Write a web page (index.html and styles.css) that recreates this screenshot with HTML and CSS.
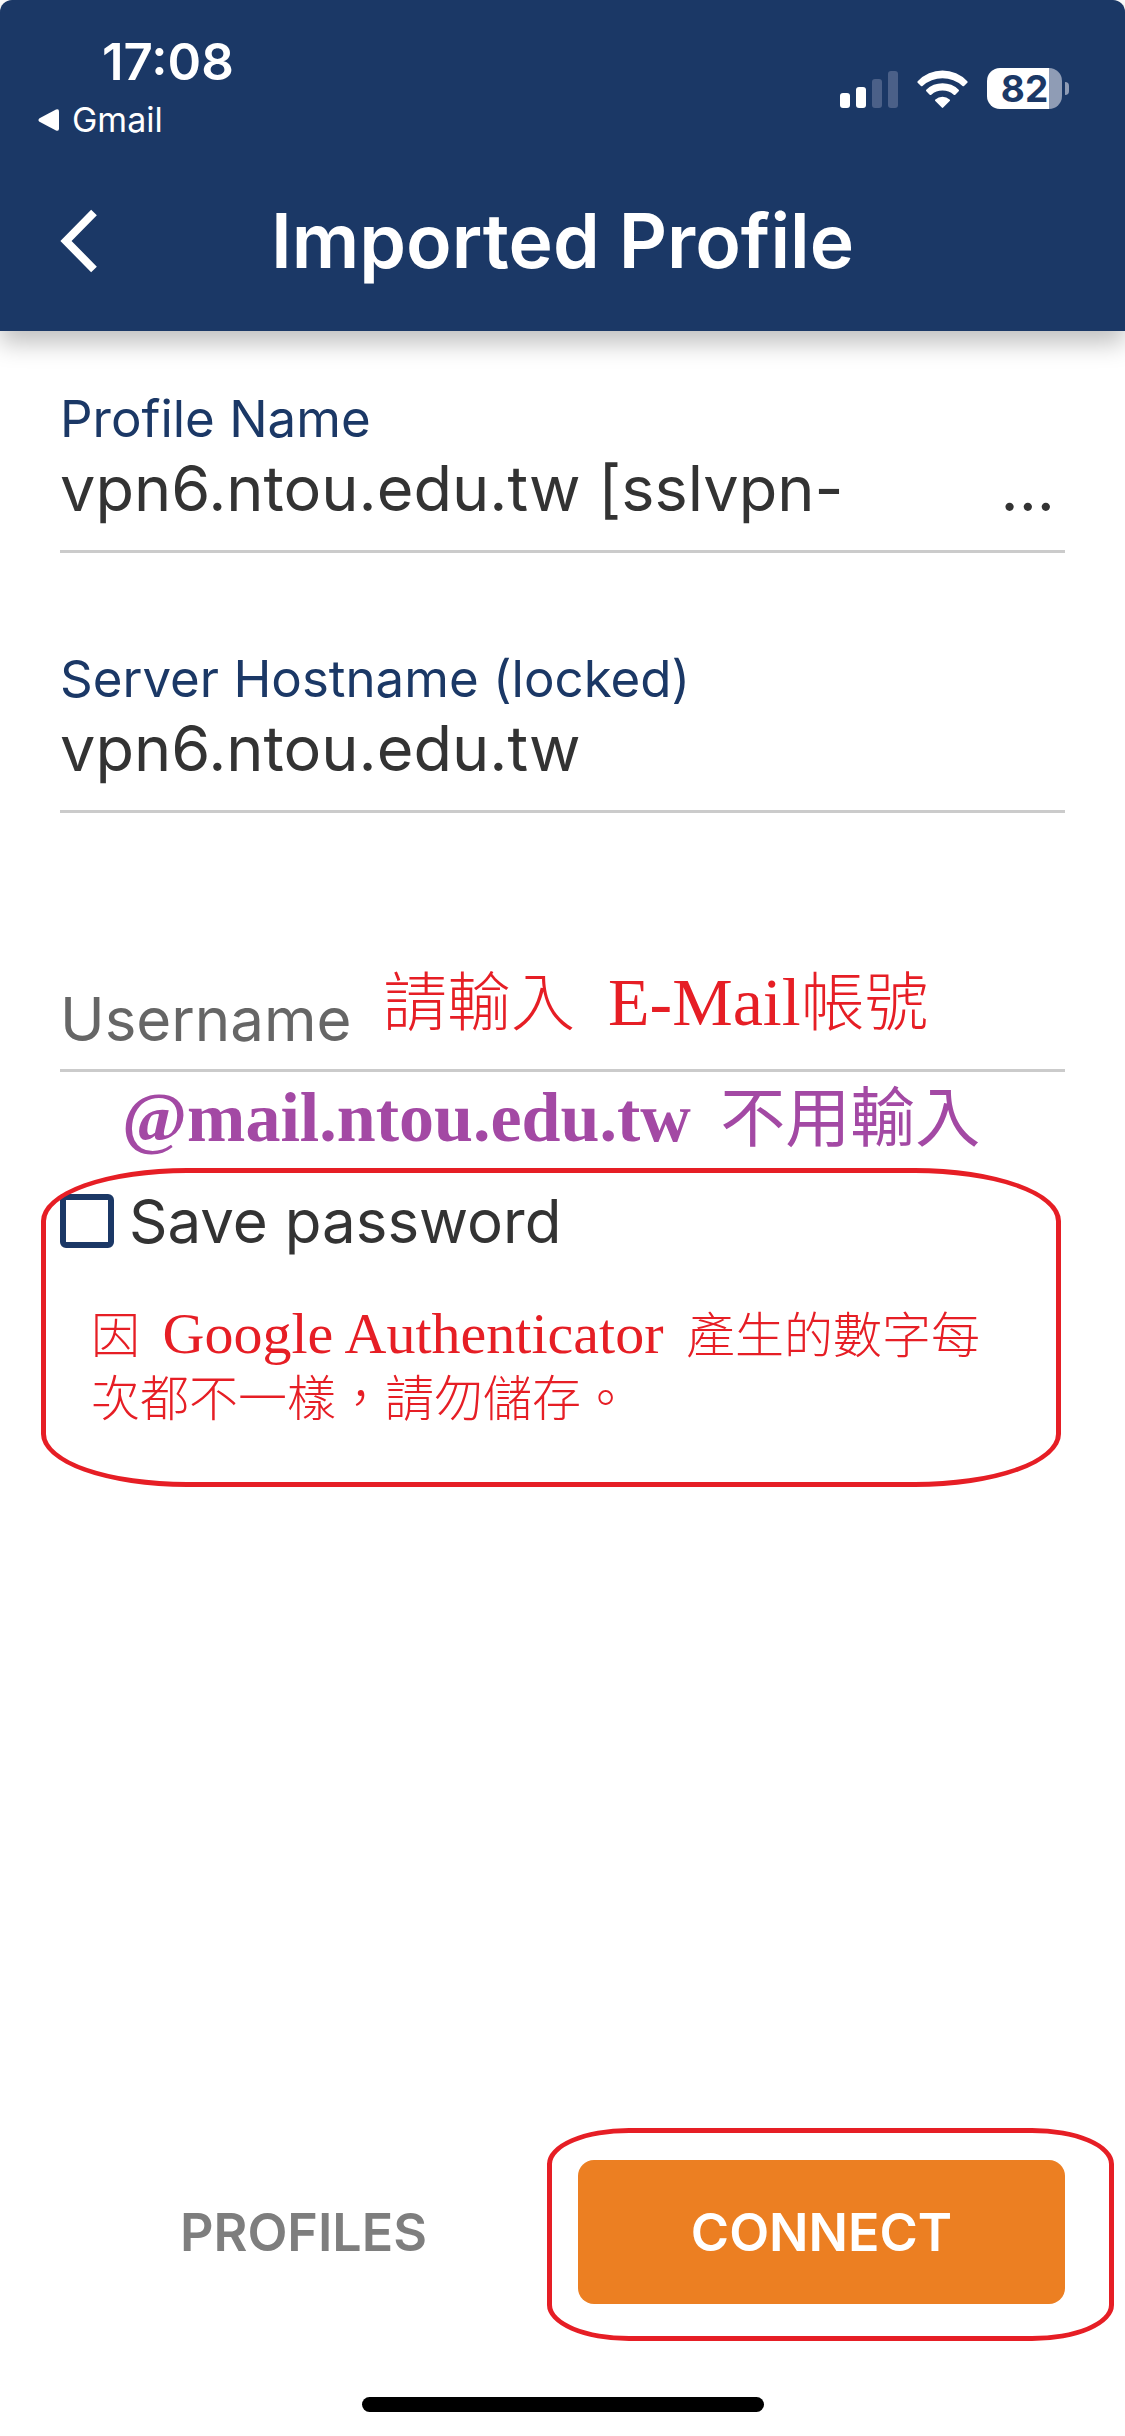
FILE: index.html
```html
<!DOCTYPE html>
<html lang="zh-Hant">
<head>
<meta charset="utf-8">
<meta name="viewport" content="width=device-width, initial-scale=1">
<title>Imported Profile</title>
<link rel="stylesheet" href="styles.css">
</head>
<body>
<header class="app-header">
  <div class="status-bar">
    <div class="status-left">
      <time class="clock">17:08</time>
      <a class="return-link" href="#gmail">
        <svg class="return-icon" viewBox="0 0 21 22" aria-hidden="true"><path d="M1.5 9.2 18 .6Q21-.6 21 2.500V19.500Q21 22.600 18 21.400L1.500 12.800Q-.6 11 1.500 9.200Z" fill="#fff"/></svg>
        <span>Gmail</span>
      </a>
    </div>
    <div class="status-right">
      <svg class="signal" viewBox="0 0 58 38" aria-hidden="true">
        <rect x="0" y="23" width="10" height="15" rx="3" fill="#fff"/>
        <rect x="16" y="17" width="10" height="21" rx="3" fill="#fff"/>
        <rect x="32" y="9" width="10" height="29" rx="3" fill="#4b6088"/>
        <rect x="48" y="1" width="10" height="37" rx="3" fill="#4b6088"/>
      </svg>
      <svg class="wifi" viewBox="0 0 51 38" fill="#fff" aria-hidden="true">
        <path d="M.7 11.200A34 34 0 0 1 50.300 11.200Q51 12 50.300 12.800L47 16Q46.300 16.600 45.500 16A30 30 0 0 0 5.500 16Q4.700 16.600 4 16L.7 12.800Q0 12 .7 11.200Z"/>
        <path d="M9.300 19.800A23 23 0 0 1 41.700 19.800Q42.400 20.600 41.700 21.300L38.300 24.700Q37.500 25.400 36.700 24.700A17 17 0 0 0 14.300 24.700Q13.500 25.400 12.700 24.700L9.300 21.300Q8.600 20.600 9.300 19.800Z"/>
        <path d="M18.400 29.400A11 11 0 0 1 32.600 29.400Q33.400 30.200 32.700 31L26.200 37.600Q25.500 38.200 24.800 37.600L18.300 31Q17.600 30.200 18.400 29.400Z"/>
      </svg>
      <div class="battery"><span class="battery-level">82</span></div>
    </div>
  </div>
  <div class="title-bar">
    <button class="back-button" type="button" aria-label="Back">
      <svg class="back-icon" viewBox="0 0 38 64" aria-hidden="true"><path d="M34 3.500 6 32 34 60.500" fill="none" stroke="#fff" stroke-width="8"/></svg>
    </button>
    <h1 class="title">Imported Profile</h1>
  </div>
</header>

<main class="form">
  <div class="field">
    <label class="field-label" for="profile-name">Profile Name</label>
    <div class="field-row">
      <input class="field-input" id="profile-name" type="text" value="vpn6.ntou.edu.tw [sslvpn-">
      <span class="field-more">...</span>
    </div>
  </div>
  <div class="field">
    <label class="field-label" for="hostname">Server Hostname (locked)</label>
    <div class="field-row">
      <input class="field-input" id="hostname" type="text" value="vpn6.ntou.edu.tw" readonly>
    </div>
  </div>
  <div class="field field-username">
    <input class="field-input field-input-empty" id="username" type="text" placeholder="Username" aria-label="Username">
    <p class="note note-account">請輸入<span class="note-latin note-account-name"> E-Mail</span>帳號</p>
  </div>
  <p class="note note-domain"><span class="note-latin note-domain-name">@mail.ntou.edu.tw </span>不用輸入</p>
  <section class="save-panel">
    <div class="save-row">
      <input class="checkbox" id="save-password" type="checkbox">
      <label class="save-label" for="save-password">Save password</label>
    </div>
    <p class="note note-save">因<span class="note-latin note-save-name"> Google Authenticator </span>產生的數字每<br>次都不一樣，請勿儲存。</p>
  </section>
</main>

<footer class="actions">
  <div class="action-row">
    <button class="action action-plain" type="button">PROFILES</button>
    <div class="connect-wrap">
      <button class="action action-primary" type="button">CONNECT</button>
    </div>
  </div>
  <div class="home-indicator"></div>
</footer>
</body>
</html>
```
FILE: styles.css
```css
:root {
  --navy: #1b3866;
  --ink: #333;
  --rule: #cbcbcb;
  --mark: #e61e25;
  --gutter: 60px;
}

* {
  box-sizing: border-box;
}

body {
  margin: 0;
  min-height: 100vh;
  display: flex;
  flex-direction: column;
  background: #fff;
  color: var(--ink);
  font-family: Inter, "Noto Sans CJK TC", sans-serif;
}

button,
input {
  font: inherit;
  color: inherit;
  border: 0;
  padding: 0;
  background: none;
}

p,
h1 {
  margin: 0;
}

/* Header */

.app-header {
  background: var(--navy);
  color: #fff;
  border-radius: 12px 12px 0 0;
  box-shadow: 0 12px 24px rgba(0, 0, 0, 0.25);
}

.status-bar {
  height: 150px;
  padding: 32px 56px 0 38px;
  display: flex;
  justify-content: space-between;
  align-items: flex-start;
}

.clock {
  display: block;
  padding-left: 64px;
  font-size: 51px;
  line-height: 60px;
  font-weight: 600;
}

.return-link {
  display: flex;
  align-items: center;
  gap: 13px;
  color: inherit;
  text-decoration: none;
  font-size: 34px;
  line-height: 56px;
}

.return-icon {
  width: 21px;
  height: 22px;
}

.status-right {
  display: flex;
  align-items: center;
  padding-top: 36px;
}

.signal {
  width: 58px;
  height: 38px;
  margin-right: 19px;
}

.wifi {
  width: 51px;
  height: 38px;
  margin-right: 19px;
}

.battery {
  position: relative;
  width: 75px;
  height: 41px;
  margin-right: 7px;
  border-radius: 13px;
  background: linear-gradient(to right, #fff 62px, #8f9cb5 62px);
  color: var(--navy);
  text-align: center;
}

.battery::after {
  content: "";
  position: absolute;
  left: 78px;
  top: 14px;
  width: 4px;
  height: 13px;
  border-radius: 0 4px 4px 0;
  background: #8f9cb5;
}

.battery-level {
  display: block;
  font-size: 37px;
  line-height: 41px;
  font-weight: 700;
}

.title-bar {
  height: 181px;
  padding: 0 var(--gutter);
  display: grid;
  grid-template-columns: 38px 1fr 38px;
  align-items: center;
}

.back-button {
  height: 64px;
}

.back-icon {
  display: block;
  width: 38px;
  height: 64px;
}

.title {
  font-size: 75px;
  line-height: 90px;
  font-weight: 600;
  text-align: center;
}

/* Form */

.form {
  flex: 1;
  padding: 58px var(--gutter) 0;
}

.field {
  position: relative;
  margin-bottom: 96px;
  border-bottom: 3px solid var(--rule);
}

.field-label {
  display: block;
  color: var(--navy);
  font-size: 51px;
  line-height: 60px;
}

.field-row {
  display: flex;
  padding-bottom: 23px;
}

.field-input {
  flex: 1;
  min-width: 0;
  height: 78px;
  font-size: 63px;
}

.field-more {
  padding-right: 10px;
  font-size: 63px;
  line-height: 78px;
}

.field-username {
  margin: 156px 0 7px;
}

.field-input-empty {
  display: block;
  width: 100%;
  height: 100px;
  font-size: 60px;
}

.field-input-empty::placeholder {
  color: #666;
  opacity: 1;
}

/* Handbook notes over the form */

.note {
  color: var(--mark);
  font-family: "Liberation Serif", "Noto Sans CJK TC", serif;
  font-weight: 300;
}

.note-latin {
  line-height: 48px;
}

.note-account {
  position: absolute;
  left: 323px;
  top: -5px;
  font-size: 64px;
  line-height: 80px;
  white-space: nowrap;
}

.note-account-name {
  padding-left: 16px;
  font-size: 68px;
}

.note-domain {
  padding-left: 62px;
  color: #a349a4;
  font-size: 65px;
  font-weight: 400;
  line-height: 80px;
}

.note-domain-name {
  padding-right: 12px;
  font-size: 70px;
  font-weight: 700;
}

.save-panel {
  position: relative;
  margin-top: 9px;
  padding: 23px 0 56px;
}

.save-panel::after {
  content: "";
  position: absolute;
  inset: 0 4px 0 -19px;
  border: 5px solid var(--mark);
  border-radius: 146px / 53px;
  pointer-events: none;
}

.save-row {
  display: flex;
  align-items: center;
  gap: 15px;
}

.checkbox {
  appearance: none;
  width: 54px;
  height: 54px;
  margin: 0;
  border: 6px solid var(--navy);
  border-radius: 6px;
}

.save-label {
  font-size: 60px;
  line-height: 60px;
}

.note-save {
  margin-top: 54px;
  padding-left: 31px;
  font-size: 49px;
  line-height: 63px;
}

.note-save-name {
  padding: 0 8px;
  font-size: 58px;
}

/* Footer */

.actions {
  padding: 0 var(--gutter) 24px;
}

.action-row {
  display: grid;
  grid-template-columns: 1fr 1fr;
  gap: 31px;
}

.action {
  width: 100%;
  height: 144px;
  border-radius: 16px;
  font-size: 52px;
  font-weight: 600;
}

.action-plain {
  color: #7e7e7e;
}

.action-primary {
  background: #ec7f22;
  color: #fff;
}

.connect-wrap {
  position: relative;
}

.connect-wrap::after {
  content: "";
  position: absolute;
  inset: -32px -49px -37px -31px;
  border: 5px solid var(--mark);
  border-radius: 82px / 36px;
  pointer-events: none;
}

.home-indicator {
  width: 402px;
  height: 15px;
  margin: 93px auto 0;
  border-radius: 8px;
  background: #000;
}
```
